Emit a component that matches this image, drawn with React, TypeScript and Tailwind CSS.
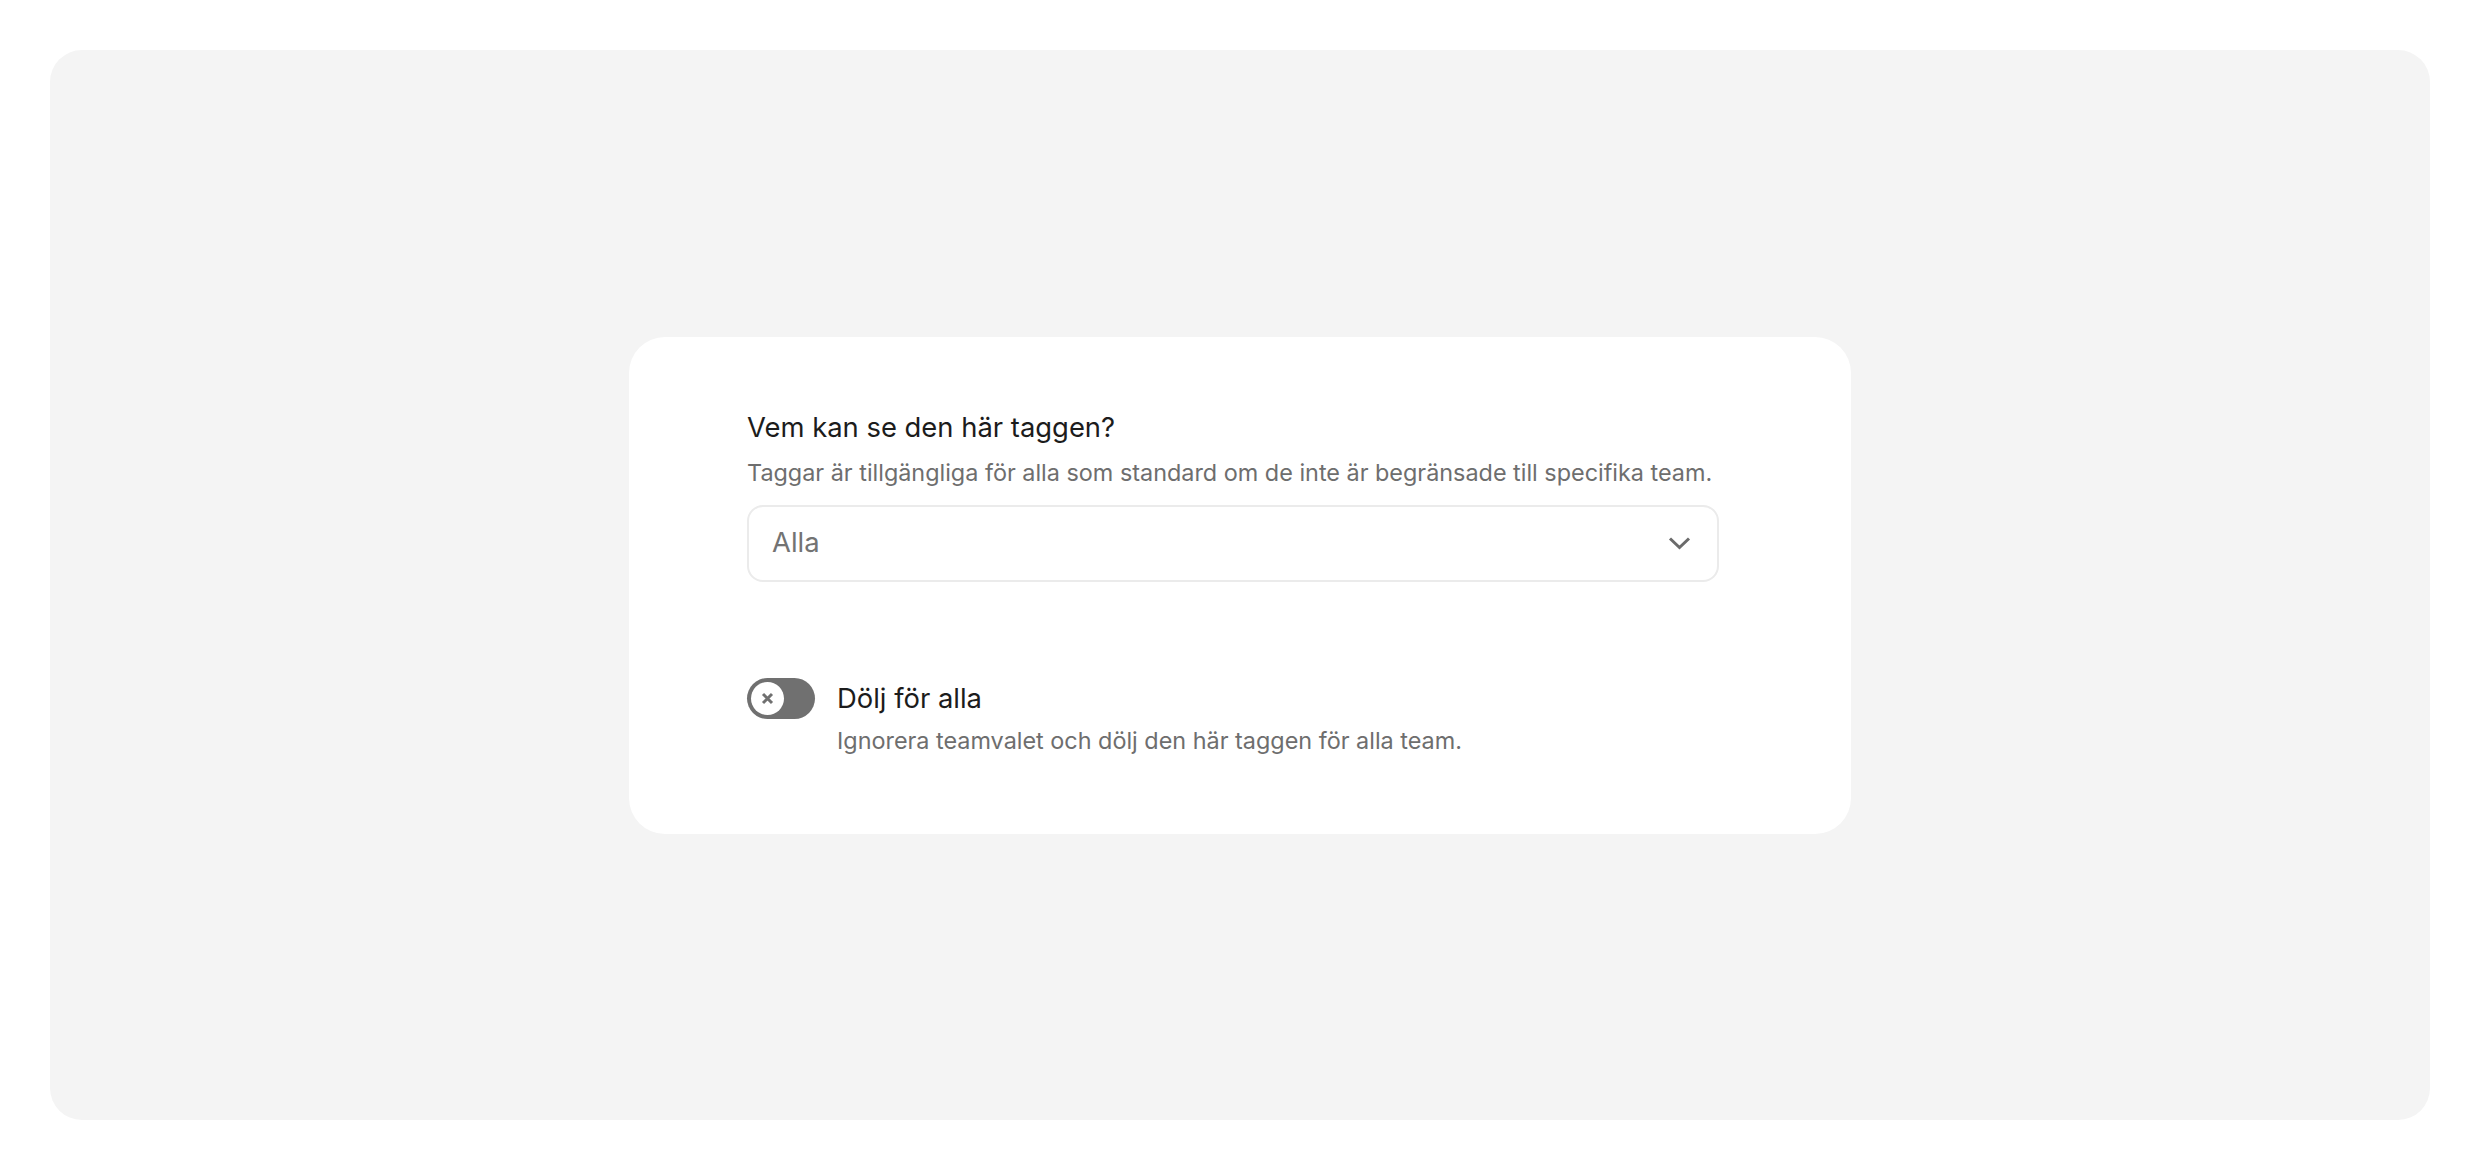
import React, { useState } from 'react';

export default function App() {
    const [hidden, setHidden] = useState(false);

    return (
        <div className="w-[2480px] h-[1170px] bg-white p-[50px] font-['Inter','Noto_Sans',sans-serif]">
            <div className="w-full h-full bg-[#f4f4f4] rounded-[32px] flex items-center justify-center">
                {/* Card */}
                <div className="w-[1222px] bg-white rounded-[36px] pl-[118px] pr-[132px] pt-[72px] pb-[77px]">
                    <h2 className="text-[27.4px] leading-[36px] text-[#1c1c1c]">Vem kan se den här taggen?</h2>
                    <p className="mt-[12px] text-[23.4px] leading-[32px] text-[#6e6e6e] whitespace-nowrap">
                        Taggar är tillgängliga för alla som standard om de inte är begränsade till specifika team.
                    </p>

                    {/* Select */}
                    <button
                        type="button"
                        className="mt-[16px] w-[972px] h-[77px] flex items-center justify-between pl-[23px] pr-[26px] border-2 border-[#ebebeb] rounded-[16px] bg-white"
                    >
                        <span className="text-[27.4px] text-[#737373]">Alla</span>
                        <svg width="23" height="14" viewBox="0 0 23 14" fill="none">
                            <path d="M2 2.5L11.5 11.5L21 2.5" stroke="#6b6b6b" strokeWidth="3" />
                        </svg>
                    </button>

                    {/* Toggle row */}
                    <div className="mt-[98px] flex items-start gap-[22px]">
                        <button
                            type="button"
                            onClick={() => setHidden(!hidden)}
                            className="mt-[-2px] w-[68px] h-[41px] rounded-full bg-[#707070] p-[4px] flex items-center shrink-0"
                        >
                            <span className="w-[33px] h-[33px] rounded-full bg-white flex items-center justify-center">
                                <svg width="13" height="13" viewBox="0 0 13 13" fill="none">
                                    <path d="M2 2L11 11M11 2L2 11" stroke="#707070" strokeWidth="3" />
                                </svg>
                            </span>
                        </button>
                        <div>
                            <div className="text-[27.4px] leading-[36px] text-[#1c1c1c]">Dölj för alla</div>
                            <div className="mt-[9px] text-[23.4px] leading-[32px] text-[#6e6e6e]">
                                Ignorera teamvalet och dölj den här taggen för alla team.
                            </div>
                        </div>
                    </div>
                </div>
            </div>
        </div>
    );
}
